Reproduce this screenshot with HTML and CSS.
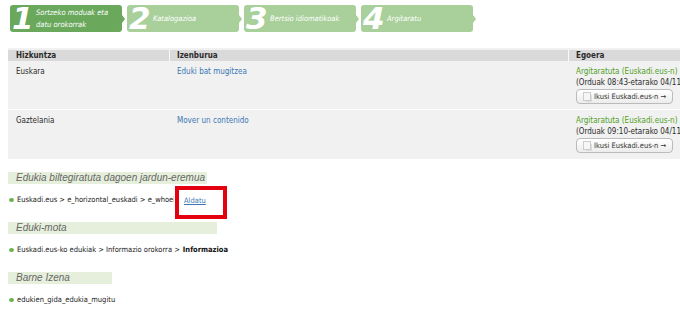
FILE: index.html
```html
<!DOCTYPE html>
<html lang="eu">
<head>
    <meta charset="UTF-8">
    <title>Eduki bat mugitzea</title>
    <link rel="stylesheet" href="styles.css">
</head>
<body>

<div class="steps">
    <div class="step current"><span class="num">1</span><span class="label">Sortzeko moduak eta datu orokorrak</span></div>
    <div class="step"><span class="num">2</span><span class="label">Katalogazioa</span></div>
    <div class="step"><span class="num">3</span><span class="label">Bertsio idiomatikoak</span></div>
    <div class="step"><span class="num">4</span><span class="label">Argitaratu</span></div>
</div>

<div class="versions">
    <div class="row head">
        <div class="col lang">Hizkuntza</div>
        <div class="col title">Izenburua</div>
        <div class="col state">Egoera</div>
    </div>
    <div class="row">
        <div class="col lang">Euskara</div>
        <div class="col title"><a href="#">Eduki bat mugitzea</a></div>
        <div class="col state">
            <div class="ok">Argitaratuta (Euskadi.eus-n)</div>
            <div class="when">(Orduak 08:43-etarako 04/11/20</div>
            <button class="view"><span class="ico"></span>Ikusi Euskadi.eus-n &rarr;</button>
        </div>
    </div>
    <div class="row">
        <div class="col lang">Gaztelania</div>
        <div class="col title"><a href="#">Mover un contenido</a></div>
        <div class="col state">
            <div class="ok">Argitaratuta (Euskadi.eus-n)</div>
            <div class="when">(Orduak 09:10-etarako 04/11/20</div>
            <button class="view"><span class="ico"></span>Ikusi Euskadi.eus-n &rarr;</button>
        </div>
    </div>
</div>

<div class="section">
    <h3 class="wide">Edukia biltegiratuta dagoen jardun-eremua</h3>
    <p class="item"><span class="path">Euskadi.eus &gt; e_horizontal_euskadi &gt; e_whoek</span><span class="marked"><a href="#">Aldatu</a></span></p>
</div>

<div class="section">
    <h3 class="wider">Eduki-mota</h3>
    <p class="item">Euskadi.eus-ko edukiak &gt; Informazio orokorra &gt; <b>Informazioa</b></p>
</div>

<div class="section">
    <h3 class="short">Barne Izena</h3>
    <p class="item">edukien_gida_edukia_mugitu</p>
</div>

</body>
</html>
```

FILE: styles.css
```css
body {
    margin: 0;
    font-family: "DejaVu Sans Condensed", "DejaVu Sans", sans-serif;
    font-size: 8px;
    color: #2b2b2b;
    background: #fff;
    overflow: hidden;
}
a {
    color: #3b78b4;
    text-decoration: none;
}

/* wizard steps */
.steps {
    display: flex;
    gap: 5px;
    padding: 5px 0 0 10px;
}
.step {
    position: relative;
    display: flex;
    align-items: center;
    width: 112px;
    height: 27px;
    background: #a9d09b;
    border-radius: 3px;
    color: #fff;
    font-style: italic;
}
.step.current {
    background: #6aa85c;
}
.step::after {
    content: "";
    position: absolute;
    right: -3px;
    top: 10px;
    border-left: 3px solid #a9d09b;
    border-top: 4px solid transparent;
    border-bottom: 4px solid transparent;
}
.step.current::after {
    border-left-color: #6aa85c;
}
.step .num {
    width: 20px;
    text-align: center;
    font-family: "DejaVu Sans", sans-serif;
    font-size: 31px;
    font-weight: bold;
    line-height: 27px;
    margin-left: 2px;
}
.step .label {
    font-size: 7.5px;
    line-height: 12px;
    padding-left: 4px;
    width: 80px;
}

/* versions table */
.versions {
    margin: 16px 0 0 8px;
    padding-top: 2px;
    background: #f1f1f1;
    height: 109px;
}
.row {
    display: flex;
    height: 48px;
    border-bottom: 1px solid #fff;
}
.row.head {
    height: 11px;
    background: #d9d9d9;
    font-weight: bold;
    line-height: 11px;
    border-bottom: none;
}
.row:last-child {
    border-bottom: none;
}
.col {
    box-sizing: border-box;
    padding: 5px 7px 0;
    flex-shrink: 0;
}
.row.head .col {
    padding-top: 0;
}
.col.lang {
    width: 161px;
    padding-left: 8px;
}
.col.title {
    width: 399px;
    border-left: 1px solid transparent;
}
.col.state {
    flex: 1;
    min-width: 0;
    white-space: nowrap;
    border-left: 1px solid transparent;
}
.row.head .col + .col {
    border-left-color: #fafafa;
}
.row:not(.head) .col {
    line-height: 11px;
}
.ok {
    color: #4f9f1f;
}
.view {
    display: flex;
    align-items: center;
    gap: 3px;
    margin-top: 1px;
    box-sizing: border-box;
    width: 97px;
    height: 15px;
    padding: 0 0 0 6px;
    border: 1px solid #bbb;
    border-radius: 4px;
    background: linear-gradient(#fff, #ececec);
    font-family: inherit;
    font-size: 7.5px;
    color: #333;
    white-space: nowrap;
}
.view .ico {
    flex-shrink: 0;
    width: 6px;
    height: 7px;
    border: 1px solid #ccc;
    background: #f6f6f6;
    box-shadow: 2px 2px 0 -1px #ddd;
}

/* info sections */
.section {
    margin: 13px 0 0 8px;
}
.section + .section {
    margin-top: 0;
}
.section h3 {
    margin: 0;
    box-sizing: border-box;
    height: 12px;
    line-height: 12px;
    padding-left: 8px;
    background: #e6efdc;
    color: #666;
    font-family: "Liberation Sans", sans-serif;
    font-size: 10px;
    font-weight: normal;
    font-style: italic;
    white-space: nowrap;
}
.section h3.wide {
    width: 199px;
}
.section h3.wider {
    width: 209px;
}
.section h3.short {
    width: 104px;
}
.item {
    position: relative;
    display: flex;
    margin: 0;
    height: 38px;
    line-height: 32px;
    padding-left: 9px;
    font-size: 7.5px;
    color: #222;
}
.item b {
    color: #111;
    margin-left: 3px;
}
.item::before {
    content: "";
    position: absolute;
    left: 1px;
    top: 14px;
    width: 5px;
    height: 4px;
    border-radius: 50%;
    background: #6ab04c;
}
.path {
    width: 157px;
    overflow: hidden;
    white-space: nowrap;
}
.marked {
    position: absolute;
    left: 167px;
    top: 2px;
    width: 39px;
    height: 25px;
    border: 4px solid #e3000f;
    line-height: 22px;
    padding-left: 5px;
    box-sizing: content-box;
}
.marked a {
    text-decoration: underline;
}
```
